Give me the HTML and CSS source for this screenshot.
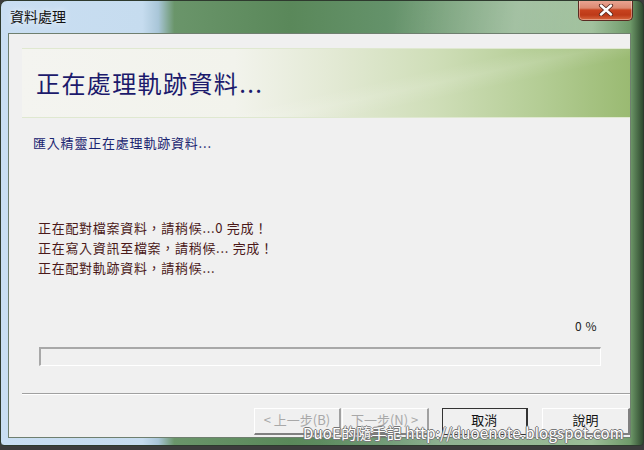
FILE: index.html
```html
<!DOCTYPE html>
<html lang="zh-Hant">
<head>
<meta charset="utf-8">
<link rel="stylesheet" href="styles.css">
</head>
<body>
<div class="window">
  <div class="titlebar">
    <span class="title">資料處理</span>
    <div class="close">
      <svg width="18" height="12" viewBox="0 0 18 12"><path d="M4 1.5 L14 10.5 M14 1.5 L4 10.5" stroke="#5a2a20" stroke-width="4.2" stroke-linecap="round"/><path d="M4 1.5 L14 10.5 M14 1.5 L4 10.5" stroke="#ffffff" stroke-width="2.4" stroke-linecap="round"/></svg>
    </div>
  </div>
  <div class="client">
    <div class="banner"><span class="banner-text">正在處理軌跡資料...</span></div>
    <div class="subtitle">匯入精靈正在處理軌跡資料...</div>
    <div class="log">
      <div>正在配對檔案資料，請稍候...0 完成！</div>
      <div>正在寫入資訊至檔案，請稍候... 完成！</div>
      <div>正在配對軌跡資料，請稍候...</div>
    </div>
    <div class="percent">0 %</div>
    <div class="progress"></div>
    <div class="sep"></div>
    <div class="buttons">
      <div class="btn disabled back">&lt; 上一步(B)</div>
      <div class="btn disabled next">下一步(N) &gt;</div>
      <div class="btn cancel">取消</div>
      <div class="btn help">說明</div>
    </div>
  </div>
  <div class="watermark">DuoE的隨手記 http://duoenote.blogspot.com</div>
</div>
</body>
</html>
```
FILE: styles.css
```css
html, body {
  margin: 0;
  padding: 0;
  background: #3c3c3c;
}
body {
  width: 644px;
  height: 450px;
  overflow: hidden;
  font-family: "Noto Sans CJK TC", "Noto Sans", sans-serif;
}
.window {
  position: relative;
  box-sizing: border-box;
  width: 644px;
  height: 446px;
  border: 1px solid #2e3a2e;
  border-radius: 7px 7px 4px 4px;
  background:
    linear-gradient(100deg, rgba(255,255,255,0) 55%, rgba(255,255,255,0.18) 72%, rgba(255,255,255,0) 88%),
    linear-gradient(90deg, #c9def2 0%, #c6dcef 22%, #a9c6d8 24.5%, #6a956a 27%, #5a885a 45%, #64926a 60%, #8fb38e 80%, #9cbe98 92%, #6f9a6a 98%, #2f4a2f 100%);
  display: flex;
  flex-direction: column;
  overflow: hidden;
}
.titlebar {
  height: 32px;
  flex: none;
  display: flex;
  align-items: flex-start;
  justify-content: space-between;
}
.title {
  margin: 6px 0 0 9px;
  font-size: 14px;
  line-height: 18px;
  color: #111;
  text-shadow: 0 0 6px rgba(255,255,255,0.9);
}
.close {
  width: 55px;
  height: 21px;
  margin: -1px 10px 0 0;
  box-sizing: border-box;
  border: 1px solid #5a2a22;
  border-top: none;
  border-radius: 0 0 5px 5px;
  background: linear-gradient(180deg, #eba796 0%, #dc8a72 40%, #c8431f 50%, #bd3a18 75%, #d8683f 100%);
  display: flex;
  align-items: center;
  justify-content: center;
  box-shadow: inset 0 0 0 1px rgba(255,255,255,0.35);
}
.client {
  flex: none;
  box-sizing: border-box;
  width: 623px;
  height: 405px;
  margin-left: 7px;
  background: #f0f0f0;
  border: 1px solid #6f7f6f;
  display: flex;
  flex-direction: column;
  overflow: hidden;
}
.banner {
  margin: 14px 0 0 13px;
  height: 68px;
  flex: none;
  background:
    linear-gradient(168deg, rgba(255,255,255,0) 55%, rgba(255,255,255,0.12) 62%, rgba(255,255,255,0) 70%),
    linear-gradient(90deg, #f4f4f0 0%, #f2f3ec 35%, #e4ead6 50%, #cfdeb8 68%, #b4cd95 85%, #9aba72 100%);
  border-top: 1px solid #dfe8d0;
  border-bottom: 1px solid #dfe8d0;
  display: flex;
  align-items: center;
}
.banner-text {
  margin-left: 14px;
  font-size: 24px;
  color: #1c1a6c;
  letter-spacing: 1.4px;
  line-height: 30px;
}
.subtitle {
  margin: 16px 0 0 24px;
  font-size: 13px;
  line-height: 18px;
  color: #1a2470;
  letter-spacing: 0.8px;
}
.log {
  margin: 66px 0 0 29px;
  font-size: 13px;
  line-height: 20px;
  color: #4a1818;
  letter-spacing: 0.7px;
}
.percent {
  align-self: flex-end;
  margin: 40px 33px 0 0;
  font-size: 12px;
  line-height: 16px;
  color: #222;
  letter-spacing: 0.5px;
}
.progress {
  margin: 13px 0 0 30px;
  width: 562px;
  height: 19px;
  box-sizing: border-box;
  border-top: 2px solid #a8a8a8;
  border-left: 2px solid #a8a8a8;
  border-right: 1px solid #ffffff;
  border-bottom: 1px solid #ffffff;
  background: #f0f0f0;
}
.sep {
  margin: 27px 0 0 13px;
  height: 0;
  border-top: 1px solid #a0a0a0;
  border-bottom: 1px solid #ffffff;
}
.buttons {
  margin: 13px 0 0 245px;
  display: flex;
}
.btn {
  box-sizing: border-box;
  width: 87px;
  height: 27px;
  border-top: 1px solid #ffffff;
  border-left: 1px solid #ffffff;
  border-right: 2px solid #808080;
  border-bottom: 2px solid #808080;
  font-size: 13px;
  line-height: 22px;
  text-align: center;
  color: #111;
  background: #f0f0f0;
}
.btn.disabled {
  color: #a8a8a8;
  border-right-color: #a0a0a0;
}
.btn.next {
  margin-left: 1px;
}
.btn.cancel {
  margin-left: 13px;
  border: 1px solid #333;
  border-right: 2px solid #333;
}
.btn.help {
  margin-left: 14px;
  width: 88px;
}
.watermark {
  position: absolute;
  left: 302px;
  top: 422px;
  font-family: "Noto Sans CJK TC", "DejaVu Sans", sans-serif;
  font-size: 15px;
  line-height: 20px;
  color: #ffffff;
  letter-spacing: 0.2px;
  text-shadow: 1px 0 0 #777, -1px 0 0 #777, 0 1px 0 #777, 0 -1px 0 #777;
}
```
